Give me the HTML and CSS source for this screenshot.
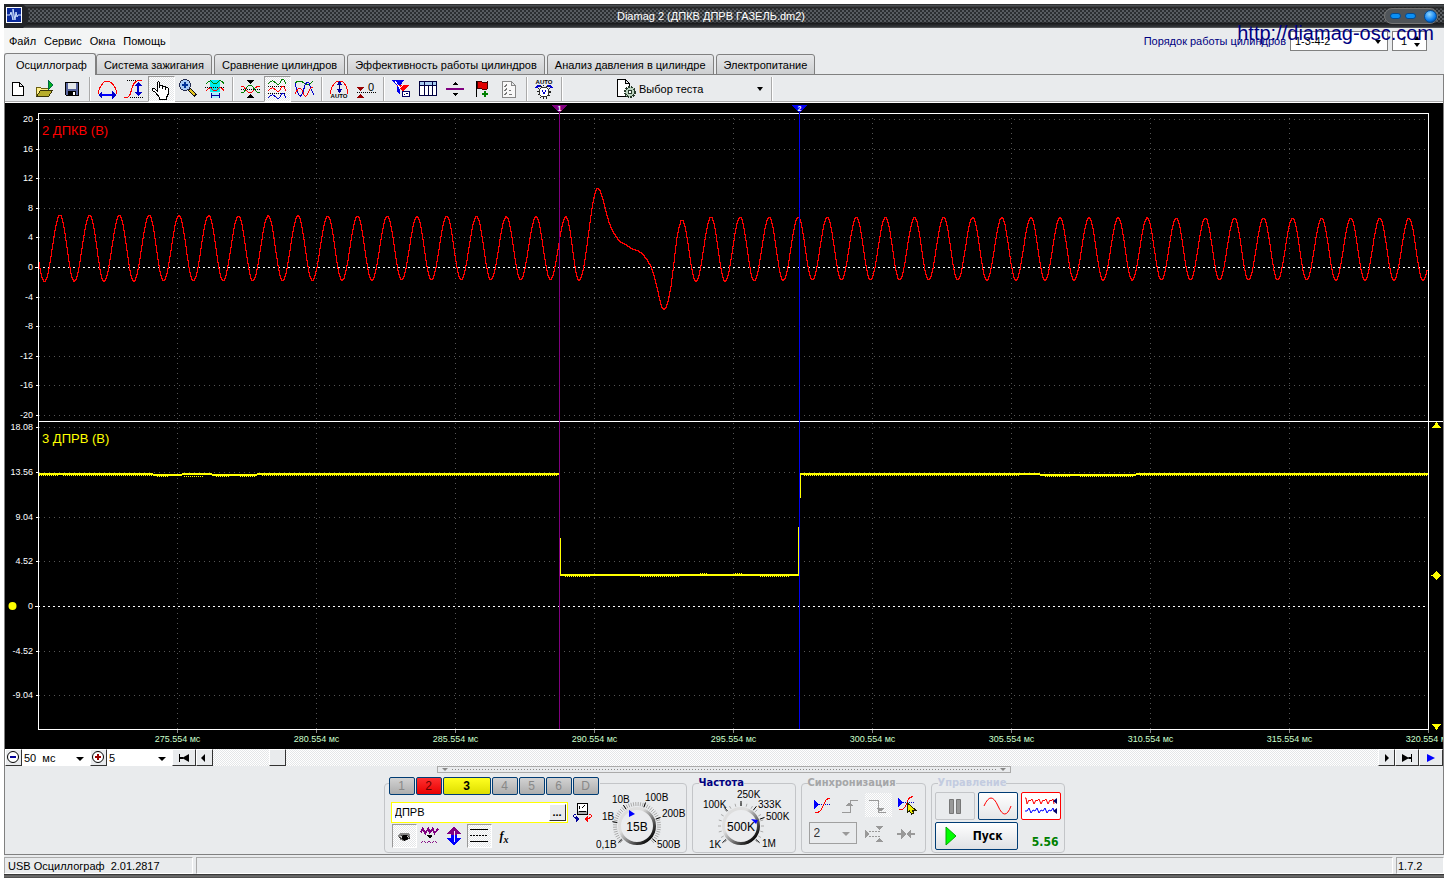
FILE: index.html
```html
<!DOCTYPE html>
<html lang="ru">
<head>
<meta charset="utf-8">
<title>Diamag 2</title>
<link rel="stylesheet" href="styles.css">
</head>
<body>
<div class="window">
  <header class="titlebar">
    <svg class="app-icon" viewBox="0 0 26 24"><path d="M0 0h19q6 5 6 12t-6 12H0z" fill="#222428"/><rect x="2.500" y="3.500" width="15" height="15" fill="#0a2a9c" stroke="#fff"/><path d="M3 11h3l1-3 2 8V5l2 11 1-8 1 5 1-2h3" fill="none" stroke="#cfe2ff"/></svg>
    <h1 class="title">Diamag 2 (ДПКВ ДПРВ ГАЗЕЛЬ.dm2)</h1>
    <div class="caption">
      <button class="cap" aria-label="Свернуть"></button><button class="cap" aria-label="Развернуть"></button><button class="cap close" aria-label="Закрыть"></button>
    </div>
  </header>

  <div class="menurow">
    <nav class="menu"><button>Файл</button><button>Сервис</button><button>Окна</button><button>Помощь</button></nav>
    <div class="order">
      <label for="order">Порядок работы цилиндров</label>
      <span class="drop order-drop"><select id="order"><option>1-3-4-2</option></select></span>
      <span class="spin"><input type="text" value="1" aria-label="Цилиндр"></span>
      <a class="site" href="http://diamag-osc.com">http://diamag-osc.com</a>
    </div>
  </div>

  <div class="tabs" role="tablist">
    <button class="tab active" role="tab">Осциллограф</button><button class="tab" role="tab">Система зажигания</button><button class="tab" role="tab">Сравнение цилиндров</button><button class="tab" role="tab">Эффективность работы цилиндров</button><button class="tab" role="tab">Анализ давления в цилиндре</button><button class="tab" role="tab">Электропитание</button>
  </div>

  <main class="page">
    <div class="toolbar">
      <button class="tool" aria-label="Новый"><svg viewBox="0 0 24 24"><path d="M6.500 5.500h7l4 4v9h-11zM13.500 5.500v4h4" fill="#fff" stroke="#000"/></svg></button>
      <button class="tool" aria-label="Открыть"><svg viewBox="0 0 24 24"><path d="M3.500 19.500v-9h4l1 1h7v8z" fill="#ffef8a" stroke="#6b5f10"/><path d="M3.500 19.500l4-6h12l-4 6z" fill="#b7ad2c" stroke="#3a3408"/><path d="M15 3l5 5-5 5z" fill="#00b020" stroke="#064"/></svg></button>
      <button class="tool" aria-label="Сохранить"><svg viewBox="0 0 24 24"><path d="M5.500 5.500h13v13h-12l-1-1z" fill="#56639c" stroke="#000"/><path d="M8 6h8v6H8z" fill="#e4e8ea"/><path d="M8 14h8v4H8z" fill="#000"/><path d="M13 15h2v3h-2z" fill="#fff"/></svg></button>
      <span class="sep"></span>
      <button class="tool" aria-label="Ширина"><svg viewBox="0 0 24 24"><path d="M3.500 17v-3q1-3 3-6 3-4 5-4h2q3 1 5 4 2 3 3 6v3" fill="none" stroke="red"/><path d="M6 18h13" stroke="#00f" stroke-width="2"/><path d="M3 18l4-4v8zM21 18l-4-4v8z" fill="#00c"/></svg></button>
      <button class="tool" aria-label="Высота"><svg viewBox="0 0 24 24"><path d="M2 20.500h3q3-1 4-6t3-8q2-3 5-3h3" fill="none" stroke="red"/><path d="M5 3.500h10M8 20.500h14" stroke="#000" stroke-dasharray="1 1"/><path d="M16 7v10" stroke="#00c" stroke-width="2"/><path d="M16 5l-4 4h8zM16 19l-4-4h8z" fill="#00c"/></svg></button>
      <button class="tool on" aria-label="Рука"><svg viewBox="0 0 24 24"><path d="M8.500 14V5.500q1-2 2 0v5-2q1-1 3 0v3-2q1-1 3 0v3-2q1-1 3 1v5l-2 4v2h-7v-2l-4-5-3-2v-2q1-1 2 0z" fill="#fff" stroke="#000"/></svg></button>
      <button class="tool" aria-label="Лупа"><svg viewBox="0 0 24 24"><path d="M13 12l7 7" stroke="#111" stroke-width="4"/><path d="M14 13l5 5" stroke="#e3c31e" stroke-width="2"/><circle cx="9" cy="8" r="5.500" fill="#a8cbf4" stroke="#222a50"/><path d="M6 8h6M9 5v6" stroke="#039" stroke-width="2"/></svg></button>
      <button class="tool" aria-label="Участок"><svg viewBox="0 0 24 24"><path d="M7 3h10v12H7z" fill="#0ee"/><path d="M8 15h8v6H8z" fill="#aef"/><path d="M3 7q3-4 5-3 2 3 4 3t4-3q3-1 5 3" fill="none" stroke="green"/><path d="M2 10.500h19" stroke="#000" stroke-dasharray="1 1"/><path d="M3 14q3-4 5-3 2 3 4 3t4-3q3-1 5 3" fill="none" stroke="red"/><path d="M8 18.500h8M8.500 16v5M16.500 16v5" stroke="#009" fill="none"/></svg></button>
      <span class="sep"></span>
      <button class="tool" aria-label="Сжать"><svg viewBox="0 0 24 24" fill="none"><path d="M3 9q3 0 5 4 2 3 4 3t5-5q2-2 5-2" stroke="red"/><path d="M3 16q3 0 5-4 2-4 4-4t5 5q2 3 5 3" stroke="green"/><path d="M3 12.500h19" stroke="#000" stroke-dasharray="1 1"/><path d="M9 3h7l-3.500 4zM9 21h7l-3.500-4z" fill="#000"/></svg></button>
      <button class="tool on" aria-label="Раздельно"><svg viewBox="0 0 24 24" fill="none"><path d="M3 7q3-4 5-3t4 3 4-3 5 3" stroke="green"/><path d="M3 9.500h18M3 16.500h18" stroke="#000" stroke-dasharray="1 1"/><path d="M3 14q3-4 5-3t4 3 4-3 5 3" stroke="red"/><path d="M3 21q3-4 5-3t4 3 4-3 5 3" stroke="#00c"/></svg></button>
      <button class="tool" aria-label="Совместно"><svg viewBox="0 0 24 24" fill="none"><path d="M3 6q4-4 9 0t9-2" stroke="green"/><path d="M3 6q3 13 5 13 2 1 5-11 2-4 4-2 2 7 5 12" stroke="#00c"/><path d="M3 17q3-6 5-6 2 1 4 7 2 3 4-2t5-6" stroke="red"/></svg></button>
      <span class="sep"></span>
      <button class="tool" aria-label="Авто"><svg viewBox="0 0 24 24"><path d="M3.500 17v-3q3-10 9-10t8 10v3" fill="none" stroke="red"/><path d="M12.500 6v9" stroke="#006"/><path d="M12.500 4l-3 4h6zM12.500 16l-3-4h6z" fill="#00a"/><text class="tiny" x="12" y="21" text-anchor="middle">AUTO</text></svg></button>
      <button class="tool" aria-label="Ноль"><svg viewBox="0 0 24 24"><path d="M3 10h7l-3.500 4zM3 21h7l-3.500-4z" fill="#900"/><path d="M3 15.500h19" stroke="#000" stroke-dasharray="1 1"/><text class="axis-dark" x="14" y="14">0</text></svg></button>
      <span class="sep"></span>
      <button class="tool" aria-label="Фильтр"><svg viewBox="0 0 24 24"><path d="M3 3h12l-4 6v9l-3-3V9z" fill="#00e"/><path d="M8 8h12l-6 7z" fill="red"/><path d="M6 4l5 7M10 12l5-5" stroke="#fff"/><path d="M13.500 14.500h7v5h-7z" fill="#fff" stroke="#006"/><path d="M15 17h1M17 16h2" stroke="#006"/></svg></button>
      <button class="tool" aria-label="Таблица"><svg viewBox="0 0 24 24"><path d="M3.500 4.500h17v14h-17z" fill="#fff" stroke="#000040"/><path d="M4 5h16v3H4z" fill="#a8cdf0"/><path d="M3 8.500h18M8.500 4v15M12.500 8v11M16.500 4v15" stroke="#000040"/></svg></button>
      <button class="tool" aria-label="Линия"><svg viewBox="0 0 24 24"><path d="M3 12h18" stroke="purple" stroke-width="2"/><path d="M9 8h6l-3-3zM9 16h6l-3 3z"/></svg></button>
      <button class="tool" aria-label="Флаг"><svg viewBox="0 0 24 24"><path d="M6.500 4v16" stroke="#000"/><path d="M7 5q3-2 5 0t5 0v7q-2 2-5 0t-5 0z" fill="#e00000" stroke="#400"/><path d="M12 17h6M15 14v6" stroke="green" stroke-width="2"/></svg></button>
      <button class="tool" aria-label="Список"><svg viewBox="0 0 24 24" fill="none"><path d="M5.500 4.500h9l4 4v12h-13zM14.500 4.500v4h4" fill="#f8f8f8" stroke="#888"/><path d="M7 9l1 1 2-3M7 13l1 1 2-3M7 17l1 1 2-3M12 13h2M12 17h3" stroke="#777"/></svg></button>
      <span class="sep"></span>
      <button class="tool" aria-label="Авто вольтметр"><svg viewBox="0 0 24 24"><text class="tiny" x="12" y="7" text-anchor="middle">AUTO</text><path d="M4 11q2-3 5-2M20 11q-2-3-5-2" stroke="#00c" fill="none" stroke-width="2"/><circle cx="12" cy="15" r="6" fill="none" stroke="#222" stroke-width="2" stroke-dasharray="1 2"/><circle cx="12" cy="15" r="5" fill="#fff" stroke="#333"/><path d="M10 13l2 4 2-4" stroke="#00c" fill="none"/></svg></button>
      <span class="sep"></span>
      <button class="test"><svg viewBox="0 0 24 24"><path d="M4.500 2.500h8l4 4v13h-12zM12.500 2.500v4h4" fill="#fff" stroke="#000"/><circle cx="17" cy="15" r="5" fill="#bcd3c0" stroke="#263a2a" stroke-width="2" stroke-dasharray="2 1"/><circle cx="17" cy="15" r="2" fill="#fff" stroke="#263a2a"/></svg><span>Выбор теста</span><i class="arrow"></i></button>
      <span class="sep"></span>
    </div>

    <svg class="scope" id="scope" viewBox="5 103 1438 646" role="img" aria-label="Осциллограмма"></svg>

    <div class="scroll">
      <button class="mini" aria-label="Уменьшить"><svg viewBox="0 0 17 17"><circle cx="8" cy="8" r="5.500" fill="#fff" stroke="#000"/><path d="M5 8h6" stroke="#009" stroke-width="2"/></svg></button>
      <span class="drop time-drop"><select aria-label="Развёртка"><option>50&nbsp; мс</option></select></span>
      <button class="mini" aria-label="Увеличить"><svg viewBox="0 0 17 17"><circle cx="8" cy="8" r="5.500" fill="#fff" stroke="#000"/><path d="M5 8h6M8 5v6" stroke="#900" stroke-width="2"/></svg></button>
      <span class="drop mul-drop"><select aria-label="Множитель"><option>5</option></select></span>
      <button class="mini wide" aria-label="В начало"><svg viewBox="0 0 17 17"><path d="M3 5h1v8H3zM13 5v8L6 9zM4 8h3v2H4z"/></svg></button>
      <button class="mini" aria-label="Назад"><svg viewBox="0 0 17 17"><path d="M9 5v8L5 9z"/></svg></button>
      <div class="track"><span class="thumb"></span></div>
      <button class="mini" aria-label="Вперёд"><svg viewBox="0 0 17 17"><path d="M7 5v8l4-4z"/></svg></button>
      <button class="mini wide" aria-label="В конец"><svg viewBox="0 0 17 17"><path d="M3 5v8l7-4zM12 5h1v8h-1zM9 8h3v2H9z"/></svg></button>
      <button class="mini wide" aria-label="Пуск прокрутки"><svg viewBox="0 0 17 17"><path d="M4 5v8l8-4z" fill="#00f"/></svg></button>
    </div>

    <div class="splitter"><i></i><b></b><i></i></div>

    <section class="controls">
      <fieldset class="group channel">
        <div class="channel-left">
          <div class="channels"><button>1</button><button class="ch-red">2</button><button class="ch-yellow">3</button><button>4</button><button>5</button><button>6</button><button>D</button></div>
          <div class="name-row">
            <div class="name"><input type="text" value="ДПРВ" aria-label="Имя канала"><button aria-label="Выбрать">...</button></div>
            <button class="tool" aria-label="Датчик"><svg viewBox="0 0 24 24"><path d="M7.500 3.500h10v11h-10z" fill="#fff" stroke="#000"/><path d="M8 11h9v3H8z" fill="#aaa"/><path d="M10 9l-1-3M12 8l3-3M9 11.500h7" stroke="#000" fill="none"/><path d="M6 14q-3 1-2 3l3 2" fill="none" stroke="#009"/><path d="M6 16l4 3-4 3z" fill="#009"/><path d="M19 14q3 1 2 3l-3 2" fill="none" stroke="red"/><path d="M18 16l-4 3 4 3z" fill="red"/></svg></button>
          </div>
          <div class="toggles">
            <button class="tool on" aria-label="Показать"><svg viewBox="0 0 24 24"><path d="M5 11q6-5 14-1l-1 5q-5 4-10 1z" fill="#888"/><path d="M6 14q6-6 13 0-6 5-13 0z" fill="#ccc" stroke="#333"/><circle cx="13" cy="14" r="3"/></svg></button>
            <button class="tool" aria-label="Сглаживание"><svg viewBox="0 0 24 24" fill="none"><path d="M3 8l2-4 3 5 3-5 2 4 3-4 2 5 4-5" stroke="purple" stroke-width="2"/><path d="M9 11h7l-3 4z" fill="#000"/><path d="M3 20l3-3 3 3 3-3 3 3 3-3 3 3" stroke="purple"/></svg></button>
            <button class="tool" aria-label="Смещение"><svg viewBox="0 0 24 24"><path d="M12 2l8 8h-5v3H9v-3H4z" fill="purple"/><path d="M12 22l8-8h-5v-3H9v3H4z" fill="#00f"/><path d="M12 6v12" stroke="#fff"/></svg></button>
            <button class="tool on" aria-label="Сетка"><svg viewBox="0 0 22 22"><path d="M2 4.500h18M2 16.500h18" stroke="#000"/><path d="M2 10.500h18" stroke="#000" stroke-dasharray="2 1"/></svg></button>
            <button class="tool fx" aria-label="Функция">f<sub>x</sub></button>
          </div>
        </div>
        <svg class="dial volts" viewBox="596 788 90 64" role="slider" aria-label="Вольты" aria-valuenow="15" data-cx="637" data-cy="826">
          <text x="612" y="803">10В</text><text x="645" y="801">100В</text><text x="602" y="820">1В</text><text x="662" y="817">200В</text><text x="596" y="848">0,1В</text><text x="657" y="848">500В</text>
        </svg>
      </fieldset>

      <fieldset class="group freq">
        <legend>Частота</legend>
        <svg class="dial" viewBox="693 788 100 64" role="slider" aria-label="Частота" aria-valuenow="500" data-cx="741" data-cy="826">
          <text x="737" y="798">250K</text><text x="703" y="808">100K</text><text x="758" y="808">333K</text><text x="766" y="820">500K</text><text x="709" y="848">1K</text><text x="762" y="847">1M</text>
        </svg>
      </fieldset>

      <fieldset class="group sync">
        <legend>Синхронизация</legend>
        <div class="sync-row">
          <button class="tool" aria-label="Уровень"><svg viewBox="0 0 24 24"><path d="M4 6l5 5-5 4z" fill="#00f"/><path d="M5 10.500h16" stroke="#00c" stroke-dasharray="1 1"/><path d="M5 18q5 2 8-6t7-8" fill="none" stroke="red"/></svg></button>
          <button class="tool" aria-label="Фронт"><svg viewBox="0 0 24 24"><path d="M4 18.500h8v-12h8M8 11h7M9 10h5M10 9h3" fill="none" stroke="#999"/></svg></button>
          <button class="tool light" aria-label="Спад"><svg viewBox="0 0 24 24"><path d="M3 6.500h9v12h8M11 14h7M12 15h5M13 16h3" fill="none" stroke="#999"/></svg></button>
          <button class="tool" aria-label="Выбор уровня"><svg viewBox="0 0 24 24"><path d="M4 4l5 4-5 5z" fill="#00f"/><path d="M5 8.500h16" stroke="#00c" stroke-dasharray="1 1"/><path d="M5 16q6 0 8-7t6-6" fill="none" stroke="red"/><path d="M13.500 9v9l2-1 2 3 2-1-1-3h3z" fill="#ee0" stroke="#220"/></svg></button>
        </div>
        <div class="sync-row">
          <span class="drop sync-drop"><select aria-label="Канал синхронизации"><option>2</option></select></span>
          <button class="tool" aria-label="Окно"><svg viewBox="0 0 24 24"><path d="M3 8l5 4-5 4zM13 4h8l-4 4zM13 20h8l-4-4z" fill="#999"/><path d="M7 9.500h12M7 14.500h12" stroke="#999" stroke-width="1" stroke-dasharray="2 1"/></svg></button>
          <button class="tool" aria-label="Сузить"><svg viewBox="0 0 24 24"><path d="M3 11h4V7l5 5-5 5v-4H3zM21 11h-4V7l-5 5 5 5v-4h4z" fill="#999"/></svg></button>
        </div>
      </fieldset>

      <fieldset class="group run">
        <legend>Управление</legend>
        <div class="run-row">
          <button class="big flat" aria-label="Пауза"><svg viewBox="0 0 38 26"><path d="M13.500 6.500h4v14h-4zM20.500 6.500h4v14h-4z" fill="#999" stroke="#777"/></svg></button>
          <button class="big" aria-label="Одиночный"><svg viewBox="0 0 38 26"><path d="M5 13q7-16 14 0t13 0" fill="none" stroke="red"/></svg></button>
          <button class="big redline" aria-label="Непрерывный"><svg viewBox="0 0 38 26" fill="none"><path d="M3 5h1l1 6 2-4 1 1 2-2 2 5 2-4 1 1 2-2 2 5 2-4 1 1 2-2 2 5 2-4 1 1 2-2 1 5" stroke="red"/><path d="M3 18h2l2-3 2 5 2-3 2 1 2-3 2 5 2-3 2 1 2-3 2 5 2-3 2 1 2-3 1 3" stroke="#00f"/><path d="M35 5v6l-4-3zM35 15v6l-4-3z" fill="#006"/></svg></button>
        </div>
        <div class="run-row">
          <button class="start"><svg viewBox="0 0 12 20"><path d="M1 1l10 9-10 9z" fill="#0f0" stroke="#0a0"/></svg><span>Пуск</span></button>
          <output class="rate">5.56</output>
        </div>
      </fieldset>
    </section>
  </main>

  <footer class="status"><span class="cell first">USB Осциллограф&nbsp; 2.01.2817</span><span class="cell grow"></span><span class="cell ver">1.7.2</span></footer>
  <div class="frame-bottom"></div>
</div>
<script src="scope.js"></script>
</body>
</html>
```

FILE: scope.js
```js
const NS = 'http://www.w3.org/2000/svg';
const scope = document.getElementById('scope');

function add(parent, name, attrs, text) {
  const el = document.createElementNS(NS, name);
  for (const key in attrs) el.setAttribute(key, attrs[key]);
  if (text) el.textContent = text;
  parent.appendChild(el);
  return el;
}
const line = (cls, d) => add(scope, 'path', { class: cls, d });

const left = 38.5, right = 1428.5, top_ = 113.5, bottom = 729.5;
const upper = [20, 16, 12, 8, 4, 0, -4, -8, -12, -16, -20];
const upperY = [119, 149, 178, 208, 237, 267, 297, 326, 356, 385, 415];
const lower = ['18.08', '13.56', '9.04', '4.52', '0', '-4.52', '-9.04'];
const lowerY = [427, 472, 517, 561, 606, 651, 695];

// Grid and axis labels
[[upper, upperY], [lower, lowerY]].forEach(([labels, ys]) => ys.forEach((y, i) => {
  const zero = Number(labels[i]) === 0;
  line(zero ? 'zero' : 'grid', `M${zero ? 38 : 39} ${y}.5H1428`);
  line('frame', `M${zero ? 35 : 36} ${y}.5H38`);
  add(scope, 'text', { class: 'axis', x: 33, y: y + 3, 'text-anchor': 'end' }, String(labels[i]));
}));
for (let i = 0; i < 10; i++) {
  const x = 177.5 + i * 139;
  if (i < 9) line('grid', `M${x} 118V729`);
  line('tick', `M${x} 730V733`);
  add(scope, 'text', { class: 'axis time', x, y: 742, 'text-anchor': 'middle' }, `${275 + i * 5}.554 мс`);
}

// Crankshaft sensor: half-cosine runs between extremes
const ext = [[29, 214]];
for (let i = 0; i < 18; i++) {
  const x = 60 + i * 29.76;
  ext.push([x - 15.5, 281 - i / 9], [x, 214.5 + i / 9]);
}
ext.push([579, 279.5], [598, 187.5]);
function run(points) {
  const out = [];
  for (let i = 1; i < points.length; i++) {
    const [x0, y0] = points[i - 1], [x1, y1] = points[i];
    const n = Math.round(x1 - x0);
    for (let k = 0; k <= n; k++) {
      out.push([x0 + (x1 - x0) * k / n, y0 + (y1 - y0) * (1 - Math.cos(Math.PI * k / n)) / 2]);
    }
  }
  return out;
}
const gap = [[600, 190], [603, 199], [606, 211], [609, 222], [612, 229], [616, 236], [620, 241], [627, 245], [633, 249],
  [638, 250], [642, 253], [647, 259], [651, 266], [654, 275], [657, 287], [660, 300], [662, 307], [664, 309], [666, 307],
  [668, 301], [671, 286], [673, 270], [675, 253], [677, 237], [679, 227], [681, 220]];
const tail = [[682, 219.5]];
for (let i = 0; i < 27; i++) {
  const x = 682 + i * 29.08;
  if (i) tail.push([x, 216.5 + i / 20]);
  tail.push([x + 14, 281 - Math.min(i, 4) / 3]);
}
const pts = [...run(ext), ...gap, ...run(tail)];
// One vertical bar per pixel column gives a connected stepped trace
let seg = 0;
let trace = '';
for (let x = 39; x <= 1427; x++) {
  while (seg < pts.length - 2 && pts[seg + 1][0] <= x) seg++;
  const [x0, y0] = pts[seg], [x1, y1] = pts[seg + 1];
  const y = Math.round(y0 + (y1 - y0) * (x - x0) / (x1 - x0 || 1)) + 0.5;
  trace += trace ? `V${y}H${x + 0.5}` : `M${x - 0.5} ${y}H${x + 0.5}`;
}
line('red', trace);

// Camshaft sensor
line('yellow thick', 'M39 474H153M182 474H212M257 474H560M800 474H1040M1136 474H1428M153 475H182M212 475H257M1040 475H1136M560 575H799');
line('yellow noise', 'M39 475.500H58M63 475.500H152M157 476.500H168M184 476.500H203M216 476.500H230M240 476.500H256M262 475.500H558M804 475.500H1020M1045 476.500H1070M1080 476.500H1134M1140 475.500H1428M565 576.500H590M640 576.500H680M700 573.500H708M735 573.500H742M760 576.500H790');
line('yellow', 'M560.500 538V576M798.500 527V576M800.500 474V498');

// Frame and cursors
line('frame', `M${left} ${top_}H${right}V${bottom}H${left}ZM${left} 421.5H1443`);
[[559, '#800080', '1'], [799, '#0000f0', '2']].forEach(([x, color, n]) => {
  add(scope, 'path', { class: 'cursor', d: `M${x}.5 112V729`, stroke: color });
  add(scope, 'path', { class: 'cursor', d: `M${x - 7} 105h15l-7.500 8z`, fill: color });
  add(scope, 'text', { class: 'flag', x: x + 0.5, y: 111, 'text-anchor': 'middle' }, n);
});
add(scope, 'text', { class: 'name-red', x: 42, y: 135 }, '2 ДПКВ (В)');
add(scope, 'text', { class: 'name-yellow', x: 42, y: 443 }, '3 ДПРВ (В)');
add(scope, 'circle', { cx: 12.5, cy: 606, r: 4, fill: '#ff0' });
add(scope, 'path', { d: 'M1432 428l4.500-6 4.500 6zM1432 724h9l-4.500 6zM1436.500 571l5 4.500-5 4.500-5-4.500z', fill: '#ff0' });

// Rotary dials
document.querySelectorAll('.dial').forEach(dial => {
  const cx = +dial.dataset.cx, cy = +dial.dataset.cy, volts = dial.classList.contains('volts');
  const id = volts ? 'rimV' : 'rimF';
  const grad = add(add(dial, 'defs', {}), 'linearGradient', { id, x1: 0, y1: 0, x2: 1, y2: 1 });
  add(grad, 'stop', { offset: '0.35', 'stop-color': '#dedede' });
  add(grad, 'stop', { offset: '0.9', 'stop-color': '#000' });
  const ray = (deg, a, b, color) => {
    const r = deg * Math.PI / 180;
    add(dial, 'path', { stroke: color, d: `M${cx + a * Math.cos(r)} ${cy + a * Math.sin(r)}L${cx + b * Math.cos(r)} ${cy + b * Math.sin(r)}` });
  };
  const step = volts ? 6 : 15;
  for (let d = 135; d <= 405; d += step) ray(d, 20, volts ? 24 : 23, '#aaa');
  (volts ? [138, 190, 237, 290, 340, 400] : [138, 228, 270, 308, 340, 402]).forEach(d => ray(d, 20, 25, '#000'));
  add(dial, 'circle', { cx, cy, r: 17.5, fill: '#ebecee', stroke: `url(#${id})`, 'stroke-width': 3 });
  add(dial, 'path', { fill: '#00f', d: volts ? 'M629 810v7l6-3z' : 'M751 819l7 1-2 4z' });
  add(dial, 'text', { class: 'dial-value', x: cx, y: cy + 5, 'text-anchor': 'middle' }, volts ? '15В' : '500K');
});
```

FILE: styles.css
```css
* { box-sizing: border-box; }
body { margin: 0; background: #fff; font: 11px/14px "Liberation Sans", sans-serif; color: #000; }
button, input, select { font: inherit; color: inherit; margin: 0; padding: 0; border: 0; background: none; border-radius: 0; }
select { appearance: none; width: 100%; }
svg { display: block; flex: none; }
fieldset { margin: 0; min-width: 0; }
h1 { margin: 0; font: inherit; }

.window { margin: 4px 4px 0; background: #e9ebed; }

.titlebar { display: flex; align-items: center; height: 24px; color: #fff;
  background: linear-gradient(#222 0, #555a5f 2px, #222 3px, transparent 6px, transparent 18px, #17181a 19px, #35383c 23px, #777 24px),
    repeating-conic-gradient(#2b2e31 0 25%, #585c61 0 50%) 0 0 / 4px 4px; }
.app-icon { width: 26px; height: 24px; }
.title { flex: 1; padding-left: 8px; text-align: center; }
.caption { display: flex; align-items: center; gap: 4px; height: 16px; padding-left: 5px; margin-right: 6px; border-radius: 8px; background: #50555a; border: 1px solid #777; }
.cap { width: 11px; height: 6px; border-radius: 3px; background: #0a8ff5; border: 1px solid #024a94; }
.close { width: 13px; height: 13px; margin-left: 4px; border-radius: 50%; background: radial-gradient(circle at 40% 30%, #8fd6ff, #0a7cf0 60%, #024); }

.menurow { display: flex; justify-content: space-between; height: 25px; }
.menu { display: flex; gap: 8px; padding: 0 4px 0 5px; background: #f4f5f5; }
.order { position: relative; display: flex; align-items: center; gap: 4px; padding-right: 17px; color: #000080; }
.site { position: absolute; right: 10px; top: -7px; font: 20px/24px "Liberation Sans", sans-serif; color: #000080; text-decoration: none; }
.drop { position: relative; display: flex; align-items: center; background: #fff; color: #000; }
.drop::after, .arrow { content: ""; border: 3px solid transparent; border-top: 4px solid #000; border-bottom: 0; }
.drop::after { position: absolute; right: 6px; top: 50%; margin-top: -1px; pointer-events: none; }
.order-drop { width: 98px; height: 20px; border: 1px solid #808080; padding-left: 4px; }
.spin { position: relative; width: 35px; height: 20px; padding-left: 8px; border: 1px solid #808080; background: #fff; color: #000; }
.spin input { width: 10px; height: 18px; }
.spin::before, .spin::after { content: ""; position: absolute; right: 6px; border: 3px solid transparent; }
.spin::before { top: 4px; border-bottom: 4px solid #000; border-top: 0; }
.spin::after { bottom: 3px; border-top: 4px solid #000; border-bottom: 0; }

.tabs { display: flex; align-items: flex-end; gap: 2px; height: 22px; margin-bottom: -1px; position: relative; }
.tab { height: 21px; padding: 0 7px; border: 1px solid #808080; border-radius: 3px 3px 0 0; background: linear-gradient(#e6e7e9, #cdcfd1); white-space: nowrap; }
.tab.active { height: 22px; padding: 0 8px 0 11px; margin-right: -2px; border-bottom: 0; background: #e9ebed; }

.page { border: 1px solid #808080; }
.toolbar { display: flex; align-items: center; height: 28px; border-bottom: 1px solid #fff; box-shadow: inset 0 -1px #aaa; }
.tool { display: grid; place-items: center start; flex: none; width: 27px; height: 26px; border: 1px solid transparent; }
.tool svg { width: 24px; height: 24px; shape-rendering: crispEdges; }
.on, .light, .track { background: repeating-conic-gradient(#fff 0 25%, #e4e6e8 0 50%) 0 0 / 2px 2px; }
.on { border-color: #999 #fff #fff #999; }
.sep { width: 2px; height: 24px; margin: 0 3px; background: #aaa; border-right: 1px solid #fff; }
.test { display: flex; align-items: center; width: 202px; height: 24px; padding: 0 5px 0 47px; }
.test svg { width: 24px; height: 24px; shape-rendering: crispEdges; }
.test span { flex: 1; text-align: left; padding-left: 2px; }
.tiny { font: bold 6px "Liberation Sans", sans-serif; }
.axis-dark { font: 11px "Liberation Sans", sans-serif; }

.scope { width: 100%; height: auto; background: #000; fill: none; }
.scope path { shape-rendering: crispEdges; }
.grid { stroke: #555; stroke-dasharray: 1 4; }
.zero { stroke: #fff; stroke-dasharray: 2 3; }
.frame { stroke: #fff; }
.tick { stroke: #888; }
.red { stroke: #f00; }
.yellow { stroke: #ff0; }
.thick { stroke-width: 2; }
.noise { stroke-dasharray: 1 1; }
.axis { font: 9px "Liberation Sans", sans-serif; fill: #fff; }
.time { fill: #cfc; }
.flag { font: bold 7px "Liberation Sans", sans-serif; fill: #fff; }
.name-red { font: 13px "Liberation Sans", sans-serif; fill: #f00; }
.name-yellow { font: 13px "Liberation Sans", sans-serif; fill: #ff0; }

.scroll { display: flex; height: 17px; }
.mini { display: grid; place-items: center; width: 17px; height: 17px; border: 1px solid #fff; border-right-color: #333; border-bottom-color: #333; background: #e9ebed; }
.mini.wide { width: 24px; }
.mini svg { width: 17px; height: 17px; margin: -1px; }
.time-drop { width: 68px; padding-left: 2px; }
.mul-drop { width: 65px; padding-left: 2px; }
.mul-drop::after, .time-drop::after { border-width: 4px 4px 0; }
.track { flex: 1; padding-left: 56px; }
.thumb { display: block; width: 17px; height: 17px; background: #e9ebed; border: 1px solid #fff; border-right-color: #333; border-bottom-color: #333; }

.splitter { display: flex; align-items: center; gap: 4px; width: 574px; height: 7px; margin: 0 auto; padding: 0 4px; border: 1px solid #aaa; }
.splitter i { border: 3px solid transparent; border-top: 3px solid #888; border-bottom: 0; }
.splitter b { flex: 1; height: 1px; background: repeating-linear-gradient(90deg, #888 0 1px, transparent 1px 3px); }

.controls { display: flex; justify-content: center; align-items: flex-end; gap: 5px; padding: 4px 0 1px; }
.group { display: flex; position: relative; height: 76px; padding: 0; border: 1px solid #c3c5c8; border-radius: 4px; }
.group legend { margin-left: 6px; padding: 0; font: bold 11px/12px "DejaVu Sans Condensed", sans-serif; color: #000080; }
.channel { width: 303px; height: 70px; }
.channel-left { width: 211px; margin-top: -7px; padding-left: 4px; }
.channels { display: flex; gap: 1px; width: 211px; background: #e9ebed; }
.channels button { width: 26px; height: 18px; border: 1px solid #003c74; border-radius: 2px; background: linear-gradient(#d2d2d2, #adadad); color: #888; font-size: 12px; }
.channels .ch-red { background: linear-gradient(#ff3030, #e80000); color: #600; }
.channels .ch-yellow { width: 48px; background: linear-gradient(#ffff20, #dede00); color: #000; font-weight: bold; }
.name-row { display: flex; align-items: center; height: 28px; margin-top: 3px; }
.name { display: flex; width: 177px; height: 21px; margin: 0 1px 0 2px; border: 1px solid #ff0; background: #fff; }
.name input { flex: 1; min-width: 0; padding-left: 3px; }
.name button { width: 17px; height: 17px; margin: 1px; line-height: 8px; font-weight: bold; background: #e9ebed; border: 1px solid #fff; border-right-color: #333; border-bottom-color: #333; }
.toggles { display: flex; margin: -2px 0 0 3px; }
.toggles .tool { width: 25px; height: 24px; }
.toggles svg { width: 22px; height: 22px; }
.toggles .fx { font: italic bold 12px/20px "Liberation Serif", serif; display: block; }
.fx sub { font-size: 10px; line-height: 0; }
.dial { font: 10px "Liberation Sans", sans-serif; }
.dial-value { font: 12px "Liberation Sans", sans-serif; }
.volts { width: 90px; height: 64px; margin-top: 4px; }
.freq { width: 104px; }
.freq .dial { width: 100px; height: 64px; margin-top: -1px; }
.sync { width: 125px; }
.sync legend { color: #a5a6a8; }
.group:not(.channel) { display: block; }
.sync-row { display: flex; justify-content: space-between; align-items: center; height: 29px; padding: 0 5px 0 7px; }
.sync-row:first-of-type { padding-top: 2px; }
.sync-row .tool { height: 24px; }
.sync-drop { width: 48px; height: 22px; padding-left: 4px; border: 1px solid #a0a0a0; background: transparent; color: #333; }
.sync-drop select { font-size: 12px; }
.sync-drop::after { border-width: 4px 4px 0; border-top-color: #999; }
.run { width: 134px; }
.run legend { color: #c3cbe0; }
.run-row { display: flex; align-items: center; gap: 3px; padding: 1px 3px; }
.run-row:first-of-type { padding-top: 3px; }
.big { width: 40px; height: 28px; border: 1px solid #003c74; border-radius: 2px; background: linear-gradient(#fff, #e4e6e8); }
.big svg { width: 38px; height: 26px; }
.flat { border-color: #c3c5c8; background: none; }
.redline { border: 1px solid #f00; background: #fff; }
.start { display: flex; align-items: center; width: 83px; height: 28px; padding: 0 14px 0 9px; border: 1px solid #003c74; border-radius: 2px; background: linear-gradient(#fff, #dfe1e4); font: bold 12px/14px "DejaVu Sans Condensed", sans-serif; }
.start svg { width: 12px; height: 20px; }
.start span { flex: 1; text-align: right; }
.rate { flex: 1; padding: 12px 2px 0 0; text-align: right; font: bold 12px/14px "DejaVu Sans Condensed", sans-serif; color: #008000; }

.status { display: flex; gap: 3px; padding-top: 2px; }
.cell { height: 17px; padding-left: 3px; line-height: 16px; border: 1px solid #aaa; border-right-color: #fff; border-bottom-color: #fff; }
.first { width: 189px; }
.grow { flex: 1; }
.ver { width: 48px; padding-left: 1px; }
.frame-bottom { height: 4px; background: linear-gradient(#222, #777 50%, #444); }
```
